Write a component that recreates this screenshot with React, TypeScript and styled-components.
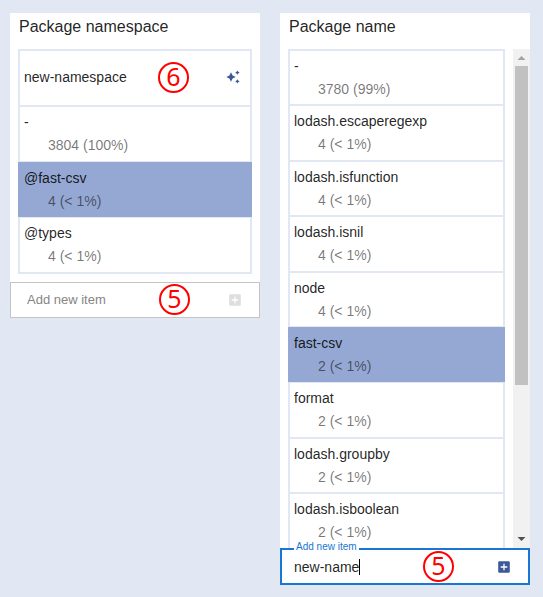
import React, { useState } from "react";
import styled, { createGlobalStyle } from "styled-components";

const colors = {
  page: "#e1e7f3",
  line: "#e1e7f3",
  selected: "#95a8d3",
  icon: "#3b5998",
  focus: "#1976d2",
};

const GlobalStyle = createGlobalStyle`
  *, *::before, *::after { box-sizing: border-box; }
  body {
    margin: 0;
    background: ${colors.page};
    font-family: "Liberation Sans", Arial, sans-serif;
    color: rgba(0, 0, 0, 0.87);
  }
`;

const Page = styled.main`
  display: grid;
  grid-template-columns: 1fr 1fr;
  align-items: start;
  gap: 20px;
  padding: 13px 13px 12px 10px;
`;

const Panel = styled.section`
  background: #fff;
`;

const Title = styled.h2`
  margin: 0;
  padding: 0 9px;
  height: 36px;
  font-size: 16px;
  font-weight: 400;
  line-height: 28px;
`;

const ListArea = styled.div<{ $scroll?: boolean }>`
  display: flex;
  padding: ${(p) => (p.$scroll ? "0 0 0 8px" : "0 8px 8px")};
  gap: 8px;
  max-height: ${(p) => (p.$scroll ? "499px" : "none")};
  overflow: hidden;
`;

const List = styled.ul`
  flex: 1;
  margin: 0;
  padding: 0;
  list-style: none;
  align-self: flex-start;
  border: solid ${colors.line};
  border-width: 1px 0;
`;

const Row = styled.li<{ $selected?: boolean }>`
  height: 55px;
  padding: 5px 4px;
  border: solid ${(p) => (p.$selected ? colors.selected : colors.line)};
  border-width: 1px 2px;
  background: ${(p) => (p.$selected ? colors.selected : "#fff")};
  font-size: 14px;

  &:nth-child(5n + 2),
  &:nth-child(5n + 4) {
    height: 56px;
  }
`;

const NewRow = styled(Row)`
  position: relative;
  display: flex;
  align-items: center;
  justify-content: space-between;
  height: 56px;
  padding: 4px 10px 6px 4px;
`;

const Name = styled.div`
  line-height: 20px;
`;

const Count = styled.div`
  padding-left: 24px;
  line-height: 26px;
  color: rgba(0, 0, 0, 0.54);
`;

const Track = styled.div`
  display: flex;
  flex-direction: column;
  align-items: center;
  flex: 0 0 17px;
  background: #f1f1f1;
`;

const Arrow = styled.svg`
  flex: 0 0 17px;
  width: 17px;
  height: 17px;
`;

const ThumbLane = styled.div`
  flex: 1;
  width: 13px;
`;

const Thumb = styled.div`
  height: 68.5%;
  background: #c1c1c1;
`;

const Field = styled.form<{ $active?: boolean }>`
  position: relative;
  display: flex;
  align-items: center;
  height: ${(p) => (p.$active ? "37px" : "36px")};
  padding: ${(p) => (p.$active ? "0 18px 0 12px" : "0 18px 0 16px")};
  border: ${(p) => (p.$active ? `2px solid ${colors.focus}` : "1px solid #c4c4c4")};
  background: #fff;
`;

const FieldLabel = styled.label`
  position: absolute;
  left: 12px;
  top: -9px;
  padding: 0 2px;
  background: linear-gradient(transparent 7px, #fff 7px);
  font-size: 10px;
  line-height: 12px;
  color: ${colors.focus};
`;

const Input = styled.input<{ $fit?: boolean }>`
  flex: ${(p) => (p.$fit ? "0 1 auto" : "1")};
  field-sizing: ${(p) => (p.$fit ? "content" : "fixed")};
  min-width: 0;
  padding: 0;
  border: 0;
  outline: 0;
  background: none;
  font: inherit;
  font-size: ${(p) => (p.$fit ? "14px" : "13px")};
  line-height: 20px;
  color: inherit;
  caret-color: transparent;

  &::placeholder {
    color: #858585;
    opacity: 1;
  }
`;

const Caret = styled.span`
  width: 1px;
  height: 16px;
  background: #000;
`;

const AddButton = styled.button`
  display: flex;
  margin: 0 0 0 auto;
  padding: 0;
  border: 0;
  background: none;
  color: ${colors.icon};
  cursor: pointer;

  &:disabled {
    color: #dedede;
    cursor: default;
  }
`;

const Marker = styled.span<{ $right: number }>`
  position: absolute;
  right: ${(p) => p.$right}px;
  top: 50%;
  display: flex;
  align-items: center;
  justify-content: center;
  width: 31px;
  height: 31px;
  margin-top: -16px;
  padding-bottom: 2px;
  border: 2px solid #f00;
  border-radius: 50%;
  font-family: "Noto Sans", "Open Sans", sans-serif;
  font-size: 25px;
  line-height: 25px;
  color: #f00;
  pointer-events: none;
`;

const SparkleIcon = () => (
  <svg width="14" height="14" viewBox="0 0 14 14" fill={colors.icon} aria-hidden="true">
    <path d="M5 2.3 6.6 5.4 9.7 7 6.6 8.6 5 11.7 3.4 8.6 .3 7 3.4 5.4Z" />
    <path d="M11.4 .4 12.2 1.8 13.6 2.6 12.2 3.4 11.4 4.8 10.6 3.4 9.2 2.6 10.6 1.8Z" />
    <path d="M11.4 9.2 12.2 10.6 13.6 11.4 12.2 12.2 11.4 13.6 10.6 12.2 9.2 11.4 10.6 10.6Z" />
  </svg>
);

const PlusIcon = () => (
  <svg width="12" height="12" viewBox="0 0 12 12" aria-hidden="true">
    <rect x=".2" y=".2" width="11.6" height="11.6" rx="1.2" fill="currentColor" />
    <path d="M6 2.7V9.3M2.7 6H9.3" stroke="#fff" strokeWidth="1.3" />
  </svg>
);

type Item = { name: string; count: string; selected?: boolean };

const namespaces: Item[] = [
  { name: "-", count: "3804 (100%)" },
  { name: "@fast-csv", count: "4 (< 1%)", selected: true },
  { name: "@types", count: "4 (< 1%)" },
];

const names: Item[] = [
  { name: "-", count: "3780 (99%)" },
  { name: "lodash.escaperegexp", count: "4 (< 1%)" },
  { name: "lodash.isfunction", count: "4 (< 1%)" },
  { name: "lodash.isnil", count: "4 (< 1%)" },
  { name: "node", count: "4 (< 1%)" },
  { name: "fast-csv", count: "2 (< 1%)", selected: true },
  { name: "format", count: "2 (< 1%)" },
  { name: "lodash.groupby", count: "2 (< 1%)" },
  { name: "lodash.isboolean", count: "2 (< 1%)" },
];

const Rows = ({ items }: { items: Item[] }) => (
  <>
    {items.map((item) => (
      <Row key={item.name} $selected={item.selected}>
        <Name>{item.name}</Name>
        <Count>{item.count}</Count>
      </Row>
    ))}
  </>
);

export default function App() {
  const [namespace, setNamespace] = useState("");
  const [name, setName] = useState("new-name");
  const stop = (e: React.FormEvent) => e.preventDefault();

  return (
    <>
      <GlobalStyle />
      <Page>
        <Panel>
          <Title>Package namespace</Title>
          <ListArea>
            <List>
              <NewRow>
                <Name>new-namespace</Name>
                <Marker $right={61}>6</Marker>
                <SparkleIcon />
              </NewRow>
              <Rows items={namespaces} />
            </List>
          </ListArea>
          <Field onSubmit={stop}>
            <Input
              aria-label="Add new item"
              placeholder="Add new item"
              value={namespace}
              onChange={(e) => setNamespace(e.target.value)}
            />
            <Marker $right={69}>5</Marker>
            <AddButton type="submit" aria-label="Add" disabled={!namespace}>
              <PlusIcon />
            </AddButton>
          </Field>
        </Panel>
        <Panel>
          <Title>Package name</Title>
          <ListArea $scroll>
            <List>
              <Rows items={names} />
            </List>
            <Track>
              <Arrow viewBox="0 0 17 17" aria-hidden="true">
                <path d="M4.5 11 8.5 7 12.5 11Z" fill="#a3a3a3" />
              </Arrow>
              <ThumbLane>
                <Thumb />
              </ThumbLane>
              <Arrow viewBox="0 0 17 17" aria-hidden="true">
                <path d="M4.5 6 8.5 10 12.5 6Z" fill="#505050" />
              </Arrow>
            </Track>
          </ListArea>
          <Field $active onSubmit={stop}>
            <FieldLabel htmlFor="package-name">Add new item</FieldLabel>
            <Input
              id="package-name"
              $fit
              value={name}
              onChange={(e) => setName(e.target.value)}
            />
            <Caret />
            <Marker $right={74}>5</Marker>
            <AddButton type="submit" aria-label="Add" disabled={!name}>
              <PlusIcon />
            </AddButton>
          </Field>
        </Panel>
      </Page>
    </>
  );
}
